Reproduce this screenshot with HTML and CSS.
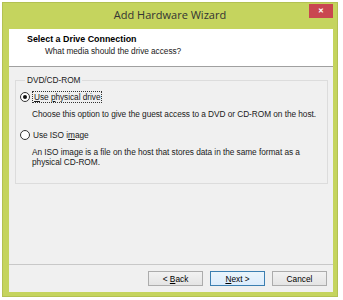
FILE: index.html
```html
<!DOCTYPE html>
<html lang="en">
<head>
    <meta charset="UTF-8">
    <title>Add Hardware Wizard</title>
    <link rel="stylesheet" href="styles.css">
</head>
<body>
    <div class="window">
        <div class="titlebar">
            <span class="title">Add Hardware Wizard</span>
            <button class="close" type="button">&#x2715;</button>
        </div>
        <div class="client">
            <div class="header">
                <h1>Select a Drive Connection</h1>
                <p>What media should the drive access?</p>
            </div>
            <div class="content">
                <fieldset class="group">
                    <legend>DVD/CD-ROM</legend>
                    <label class="option">
                        <input type="radio" name="media" checked>
                        <span class="focus"><u>U</u>se <u>p</u>hysical drive</span>
                    </label>
                    <p class="desc">Choose this option to give the guest access to a DVD or CD-ROM on the host.</p>
                    <label class="option">
                        <input type="radio" name="media">
                        <span>Use ISO i<u>m</u>age</span>
                    </label>
                    <p class="desc">An ISO image is a file on the host that stores data in the same format as a<br>physical CD-ROM.</p>
                </fieldset>
            </div>
            <div class="footer">
                <button type="button" class="btn">&lt; <u>B</u>ack</button>
                <button type="button" class="btn default"><u>N</u>ext &gt;</button>
                <button type="button" class="btn">Cancel</button>
            </div>
        </div>
    </div>
</body>
</html>
```

FILE: styles.css
```css
* {
    margin: 0;
    padding: 0;
    box-sizing: border-box;
}

body {
    background: #fff;
    font-family: 'Liberation Sans', Arial, sans-serif;
    font-size: 8.3px;
    letter-spacing: -0.05px;
    color: #1a1a1a;
}

.window {
    margin: 2px 0 0 2px;
    width: 336px;
    height: 295px;
    background: #c5d45e;
    border: 1px solid #b3c152;
    padding: 0 4px 4px 6px;
    display: flex;
    flex-direction: column;
}

.titlebar {
    height: 26px;
    display: flex;
    align-items: flex-start;
    justify-content: space-between;
}

.title {
    flex: 1;
    text-align: center;
    font-family: 'Open Sans', sans-serif;
    font-size: 11px;
    letter-spacing: 0;
    color: #333;
    padding: 4px 0 0 22px;
}

.close {
    width: 24px;
    height: 14px;
    margin-top: 1px;
    border: none;
    background: #c94650;
    color: #fff;
    font-size: 7px;
    font-weight: bold;
    line-height: 14px;
}

.client {
    flex: 1;
    background: #f0f0f0;
    display: flex;
    flex-direction: column;
}

.header {
    height: 38px;
    background: #fff;
    border-bottom: 1px solid #a0a0a0;
    padding: 4px 0 0 18px;
}

.header h1 {
    font-size: 8.9px;
    font-weight: bold;
    letter-spacing: 0;
    color: #000;
    line-height: 12px;
}

.header p {
    margin-left: 18px;
    line-height: 13px;
}

.content {
    flex: 1;
    padding: 7px 5px 0 6px;
}

.group {
    border: 1px solid #dcdcdc;
    height: 110px;
    padding: 4px 3px 0 4px;
}

.group legend {
    margin-left: 5px;
    padding: 0 2px;
    line-height: 12px;
}

.option {
    display: flex;
    align-items: center;
    height: 14px;
}

.option input {
    appearance: none;
    width: 10px;
    height: 10px;
    margin: 0 3px 0 0;
    border: 1px solid #333;
    border-radius: 50%;
    background: #fff;
    display: grid;
    place-items: center;
}

.option input:checked::after {
    content: "";
    width: 4px;
    height: 4px;
    border-radius: 50%;
    background: #111;
}

.focus {
    outline: 1px dotted #333;
    padding: 0 1px;
}

.desc {
    margin: 5px 0 9px 12px;
    line-height: 10px;
    white-space: nowrap;
}

.footer {
    height: 28px;
    border-top: 1px solid #c8c8c8;
    display: flex;
    justify-content: flex-end;
    align-items: center;
    gap: 7px;
    padding: 0 6px 0 0;
}

.btn {
    width: 55px;
    height: 15px;
    border: 1px solid #acacac;
    background: linear-gradient(#f2f2f2, #e4e4e4);
    font-family: 'Liberation Sans', Arial, sans-serif;
    font-size: 8.3px;
    color: #000;
}

.btn.default {
    border-color: #3c7fb1;
    background: linear-gradient(#eaf5fc, #dcecfc);
}
```
